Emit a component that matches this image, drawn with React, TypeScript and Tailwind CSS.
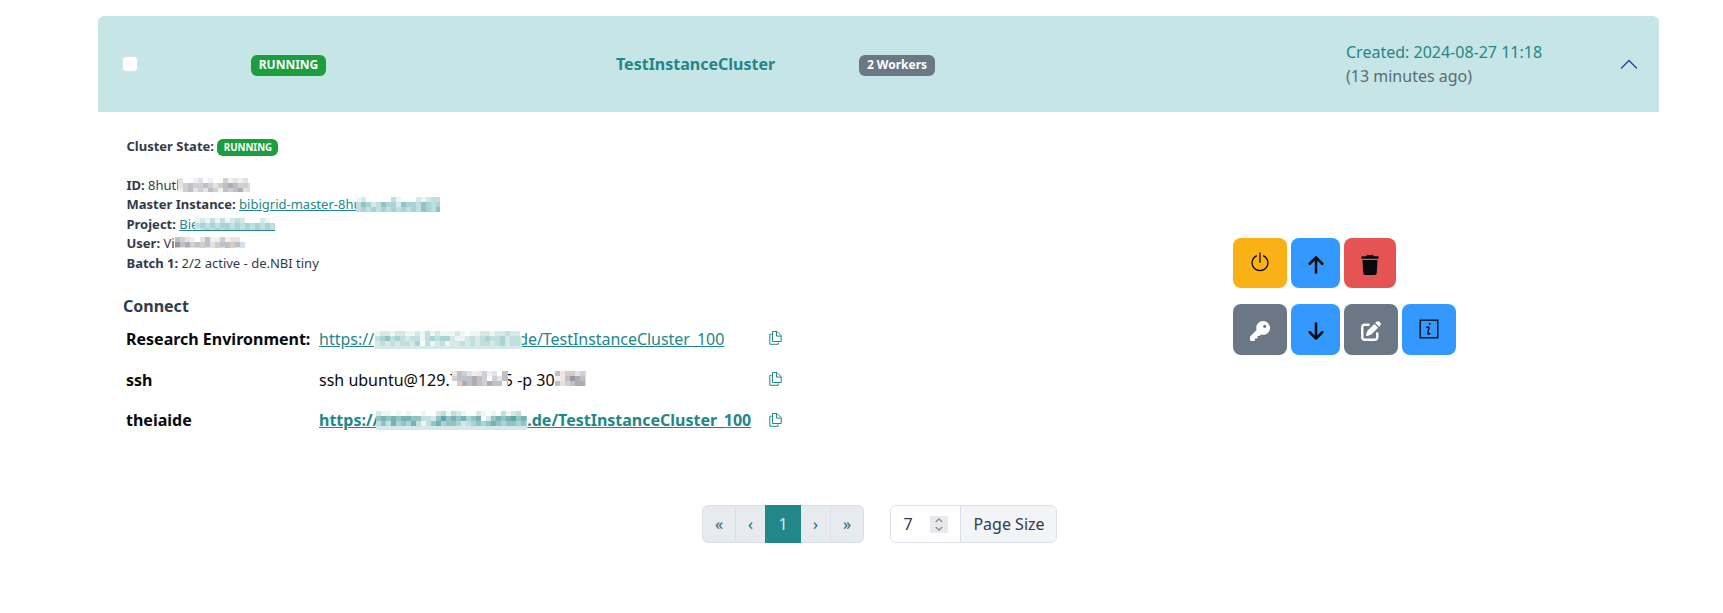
import React from "react";
import { FaArrowUp, FaArrowDown, FaKey, FaPenToSquare, FaTrash } from "react-icons/fa6";

const tones: Record<string, string> = {
  ".": "bg-white",
  a: "bg-[#f1f0f1]",
  b: "bg-[#e3e3e6]",
  c: "bg-[#d0d0d4]",
  d: "bg-[#bfc0c6]",
  e: "bg-[#b0adb2]",
  f: "bg-[#97979f]",
  w: "bg-[#d6cbc5]",
  p: "bg-[#efe6e0]",
  u: "bg-[#d5deec]",
  v: "bg-[#b7c3d3]",
  "1": "bg-[#edf6f7]",
  "2": "bg-[#d5e9e9]",
  "3": "bg-[#c2dfdf]",
  "4": "bg-[#a9d3d4]",
  "5": "bg-[#92c4c5]",
  "6": "bg-[#78b3b4]",
  "7": "bg-[#5fa8a9]",
};

/** Pixelated stand-in for a masked value. */
function Mosaic({ rows, className }: { rows: string[]; className: string }) {
  return (
    <span aria-hidden="true" className={`z-10 flex shrink-0 flex-col overflow-hidden ${className}`}>
      {rows.map((row, y) => (
        <span key={y} className="flex h-[5px] shrink-0">
          {row.split("").map((tone, x) => (
            <span key={x} className={`h-[5px] w-[5px] shrink-0 ${tones[tone]}`} />
          ))}
        </span>
      ))}
    </span>
  );
}

function PowerIcon() {
  return (
    <svg className="mb-[2px] h-[20px] w-[18px]" viewBox="0 0 18 20" fill="none" stroke="currentColor" strokeWidth="1.25">
      <path d="M9 .5v10.2M5.8 3.6a7.9 7.9 0 1 0 6.4 0" />
    </svg>
  );
}

function InfoIcon() {
  return (
    <svg className="mb-[2px] h-[20px] w-[20px]" viewBox="0 0 20 20" fill="none" stroke="currentColor" strokeWidth="1.3">
      <rect x="1.2" y="1.2" width="17.6" height="17.6" />
      <path d="M7.4 8.8c1.1-1.2 2.9-1.5 2.6.1l-1.2 5c-.4 1.9 1.5 1.5 2.5.2" />
      <path d="M10.4 4.2l.8 1.5" strokeWidth="1.5" />
    </svg>
  );
}

function CopyIcon() {
  return (
    <svg className="mt-[4px] h-[14px] w-[13px] text-[#228788]" viewBox="0 0 13 14" fill="none" stroke="currentColor" strokeWidth="1">
      <path d="M3.5.5h4.5l4.2 4.2v5.8H3.5zM7.5.5v4.6h4.7M2.6 3.3H.8v10h8.4v-1.8" />
    </svg>
  );
}

const actionBase = "flex items-center justify-center rounded-[8px]";

export default function App() {
  return (
    <div className="min-h-[613px] bg-white pt-[16px] pl-[98px] font-['Noto_Sans',sans-serif] text-[16px] leading-[24px] text-[#323a49]">
      <section className="w-[1561px]">
        <header className="flex h-[96px] items-center rounded-t-[6px] border-b border-[#d5dfe3] bg-[#c6e5e6]">
          <div className="w-[153px] pl-[24px]">
            <input type="checkbox" aria-label="Select cluster" className="block h-[16px] w-[16px] appearance-none rounded-[4px] border border-[#dbdfe6] bg-white" />
          </div>
          <div className="w-[365px] pt-[3px]">
            <span className="flex h-[21px] w-[75px] items-center justify-center rounded-[6px] bg-[#1b9e3e] text-[12px] font-bold text-white">RUNNING</span>
          </div>
          <div className="w-[243px] font-bold text-[#228788]">TestInstanceCluster</div>
          <div className="w-[487px] pt-[3px]">
            <span className="flex h-[21px] w-[76px] items-center justify-center rounded-[6px] bg-[#6b7785] text-[12px] font-bold text-white">2 Workers</span>
          </div>
          <div className="w-[274px]">
            <div className="text-[#228788]">Created: 2024-08-27 11:18</div>
            <div className="text-[#5d6b72]">(13 minutes ago)</div>
          </div>
          <svg className="h-[18px] w-[18px] text-[#3634a3]" viewBox="0 0 18 18" fill="none" stroke="currentColor" strokeWidth="1.3" strokeLinecap="round" strokeLinejoin="round">
            <path d="M1.5 13 9 5.5l7.5 7.5" />
          </svg>
        </header>

        <div className="flex h-[393px]">
          <div className="w-[1135px]">
            <div className="pt-[23px] pl-[28.5px] text-[13px] leading-[19.5px]">
              <div className="flex h-[40.5px] items-start">
                <strong className="mr-[3.5px] pt-[2px] font-bold">Cluster State:</strong>
                <span className="mt-[4px] flex h-[17px] w-[61px] items-center justify-center rounded-[6px] bg-[#1b9e3e] text-[9.75px] font-bold text-white">RUNNING</span>
              </div>
              <div className="flex h-[19.5px] whitespace-pre">
                <strong className="font-bold">ID: </strong>
                <span>8hutl</span>
                <Mosaic className="mt-[2px] -ml-[2px] h-[14px] w-[72px]" rows={["b..ab.a..cabab.", "bcvwcdcbwdedcwu", "awdbcbdcavcdebu"]} />
              </div>
              <div className="flex h-[19.5px] whitespace-pre">
                <strong className="font-bold">Master Instance: </strong>
                <span className="text-[#228788] underline">bibigrid-master-8hu</span>
                <Mosaic className="mt-[2px] -ml-[5px] h-[15px] w-[84px]" rows={["12.....31...21233", "35423544254435434", "34343434343435435"]} />
              </div>
              <div className="flex h-[19.5px] whitespace-pre">
                <strong className="font-bold">Project: </strong>
                <span className="text-[#228788] underline">Bie</span>
                <Mosaic className="mt-[3px] -ml-[3px] h-[13px] w-[80px] border-b border-[#228788]" rows={["1213131232...21.", "3434344343434343", "2343434343434343"]} />
              </div>
              <div className="flex h-[19.5px] whitespace-pre">
                <strong className="font-bold">User: </strong>
                <span>Vi</span>
                <Mosaic className="mt-[3px] h-[11px] w-[70px]" rows={["dcba.bvaawabb.", "fdecvwdbwvdwdu", "cbcbucbbcbdcbu"]} />
              </div>
              <div><strong className="font-bold">Batch 1:</strong> 2/2 active - de.NBI tiny</div>
            </div>

            <h2 className="mt-[20.5px] pl-[25px] font-bold">Connect</h2>
            <div className="pl-[28px] text-[#08090c]">
              <div className="flex h-[41px] pt-[9px]">
                <strong className="w-[193px] font-bold">Research Environment:</strong>
                <span className="flex w-[450px] text-[#228788]">
                  <span className="underline">https://</span>
                  <Mosaic className="mt-[4px] ml-px h-[18px] w-[147px]" rows={["122122112131211121.1122122322.", "345343233134344211232343342332", "232323324.31231223232332342332", "222222222222222222222222222222"]} />
                  <span className="-ml-[4px] tracking-[-0.04px] underline">de/TestInstanceCluster_100</span>
                </span>
                <CopyIcon />
              </div>
              <div className="flex h-[41px] pt-[9px]">
                <strong className="w-[193px] font-bold">ssh</strong>
                <span className="flex w-[450px] whitespace-pre">
                  <span>ssh ubuntu@129.7</span>
                  <Mosaic className="mt-[3px] -ml-[7px] h-[15px] w-[56px]" rows={["pdcbapcab.dd", "cdvdedc.cbdd", ".wededcedd.e"]} />
                  <span className="-ml-[4px]">5 -p 30</span>
                  <Mosaic className="mt-[3px] h-[15px] w-[31px]" rows={["dpcwbcu", "apdfedu", "dbcdeeu"]} />
                </span>
                <CopyIcon />
              </div>
              <div className="flex h-[40px] pt-[8px]">
                <strong className="w-[193px] font-bold">theiaide</strong>
                <span className="flex w-[450px] font-bold text-[#228788]">
                  <span className="underline">https://</span>
                  <Mosaic className="mt-[3px] -ml-[3px] h-[19px] w-[151px]" rows={["211.1.1..1..231321..21.1.3123..", "5656566553325756564560256567565", "3536454631356455423454565455453", "2222222222222222222222222222222"]} />
                  <span className="underline">.de/TestInstanceCluster_100</span>
                </span>
                <span className="pt-px"><CopyIcon /></span>
              </div>
            </div>
          </div>

          <div className="flex flex-col gap-[16px] pt-[126px]">
            <div className="flex h-[50px] gap-[4px] text-[#080a0c]">
              <button aria-label="Stop" className={`${actionBase} w-[54px] bg-[#f9b115]`}><PowerIcon /></button>
              <button aria-label="Scale up" className={`${actionBase} w-[49px] bg-[#3399ff]`}><FaArrowUp className="mt-[3px] h-[20px] w-[20px]" /></button>
              <button aria-label="Delete" className={`${actionBase} w-[52px] bg-[#e55353]`}><FaTrash className="mt-[3px] h-[20px] w-[20px]" /></button>
            </div>
            <div className="flex h-[51px] gap-[4px] text-[#080a0c]">
              <button aria-label="Key" className={`${actionBase} w-[54px] bg-[#6b7785] text-white`}><FaKey className="mt-[2px] h-[20px] w-[20px]" /></button>
              <button aria-label="Scale down" className={`${actionBase} w-[49px] bg-[#3399ff]`}><FaArrowDown className="mt-[2px] h-[20px] w-[20px]" /></button>
              <button aria-label="Edit" className={`${actionBase} w-[54px] bg-[#6b7785] text-white`}><FaPenToSquare className="mt-[2px] h-[20px] w-[20px]" /></button>
              <button aria-label="Info" className={`${actionBase} w-[54px] bg-[#3399ff]`}><InfoIcon /></button>
            </div>
          </div>
        </div>

        <footer className="flex h-[38px] pl-[604px]">
          <nav className="flex w-[162px] text-[#1b6869]">
            <button className="w-[34px] rounded-l-[6px] border border-[#dbdfe6] bg-[#e7eaee]">«</button>
            <button className="w-[29px] border-y border-[#dbdfe6] bg-[#e7eaee]">‹</button>
            <button className="w-[36px] bg-[#228788] text-[#d3e7e7]">1</button>
            <button className="w-[29px] border-y border-[#dbdfe6] bg-[#e7eaee]">›</button>
            <button className="w-[34px] rounded-r-[6px] border border-[#dbdfe6] bg-[#e7eaee]">»</button>
          </nav>
          <div className="ml-[26px] flex w-[167px] items-center overflow-hidden rounded-[6px] border border-[#dbdfe6]">
            <span className="w-[39px] pl-[12.5px]">7</span>
            <span className="flex h-[17px] w-[18px] items-center justify-center bg-[#e9e9ed]">
              <svg className="h-[13px] w-[8px] text-[#8f8f9d]" viewBox="0 0 8 13" fill="none" stroke="currentColor" strokeWidth="1.4">
                <path d="M.7 4 4 1l3.3 3M.7 9 4 12l3.3-3" />
              </svg>
            </span>
            <span className="ml-auto flex h-full w-[96px] items-center justify-center border-l border-[#dbdfe6] bg-[#f3f4f7] pl-px">Page Size</span>
          </div>
        </footer>
      </section>
    </div>
  );
}
